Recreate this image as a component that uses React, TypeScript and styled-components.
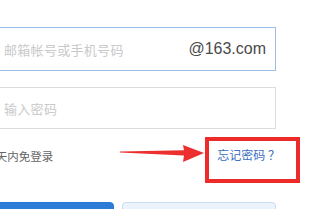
import React from "react";
import styled, { createGlobalStyle } from "styled-components";

const GlobalStyle = createGlobalStyle`
  html, body {
    margin: 0;
    padding: 0;
    background: #ffffff;
    overflow: hidden;
  }
  body {
    font-family: "Liberation Sans", "Noto Sans CJK SC", sans-serif;
  }
`;

const Page = styled.div`
  position: relative;
  width: 313px;
  height: 209px;
  overflow: hidden;
`;

const LoginForm = styled.form`
  margin-left: -34px;
  width: 310px;
  padding-top: 27px;
  display: flex;
  flex-direction: column;
`;

const Field = styled.div<{ $focused?: boolean; $h: number }>`
  box-sizing: border-box;
  height: ${(p) => p.$h}px;
  border: 1px solid ${(p) => (p.$focused ? "#9ebde6" : "#dcdcdc")};
  display: flex;
  align-items: center;
  padding: 0 9px 0 37px;
  background: #fff;
  & + & {
    margin-top: 16px;
  }
`;

const Placeholder = styled.span`
  flex: 1;
  font-family: "Noto Sans CJK SC", sans-serif;
  font-size: 13px;
  letter-spacing: 0.3px;
  color: #c9c9c9;
`;

const Suffix = styled.span`
  font-family: "Liberation Sans", Arial, sans-serif;
  font-size: 16px;
  color: #4a4a4a;
`;

const OptionRow = styled.div`
  height: 54px;
  display: flex;
  align-items: center;
  justify-content: space-between;
`;

const Remember = styled.label`
  display: flex;
  align-items: center;
  gap: 4px;
  margin-left: -1px;
  font-size: 11.5px;
  color: #666;
  font-family: "Liberation Sans", "Noto Sans CJK SC", sans-serif;
`;

const Check = styled.span`
  width: 12px;
  height: 12px;
  border: 1px solid #bbb;
  border-radius: 2px;
`;

const Forgot = styled.a`
  font-family: "Noto Sans CJK SC", sans-serif;
  font-size: 12px;
  color: #3c70c0;
  text-decoration: none;
  margin-top: -3px;
  margin-right: -4px;
  white-space: pre;
`;

const ButtonRow = styled.div`
  margin-top: 19px;
  display: flex;
  gap: 8px;
`;

const Btn = styled.button<{ $primary?: boolean }>`
  box-sizing: border-box;
  height: 40px;
  width: ${(p) => (p.$primary ? 148 : 154)}px;
  border-radius: 4px;
  border: 1px solid ${(p) => (p.$primary ? "#2a78d4" : "#c9dcf2")};
  background: ${(p) => (p.$primary ? "#2d7dd8" : "#ebf4fd")};
  padding: 0;
`;

const RedBox = styled.div`
  position: absolute;
  left: 205px;
  top: 137px;
  width: 95px;
  height: 46px;
  box-sizing: border-box;
  border: 4px solid #ee2b2b;
`;

const Arrow = styled.svg`
  position: absolute;
  left: 118px;
  top: 142px;
`;

export default function App() {
  return (
    <Page>
      <GlobalStyle />
      <LoginForm>
        <Field $focused $h={44}>
          <Placeholder>邮箱帐号或手机号码</Placeholder>
          <Suffix>@163.com</Suffix>
        </Field>
        <Field $h={42}>
          <Placeholder>输入密码</Placeholder>
        </Field>
        <OptionRow>
          <Remember>
            <Check />
            10天内免登录
          </Remember>
          <Forgot href="#">忘记密码 ？</Forgot>
        </OptionRow>
        <ButtonRow>
          <Btn $primary type="button" />
          <Btn type="button" />
        </ButtonRow>
      </LoginForm>
      <Arrow width="90" height="24" viewBox="0 0 90 24">
        <path
          d="M2 9.6 L66 8.2 L65 3 L86 11 L65 20 L66 13.6 L2 10.6 Z"
          fill="#ec2f2f"
        />
      </Arrow>
      <RedBox />
    </Page>
  );
}
